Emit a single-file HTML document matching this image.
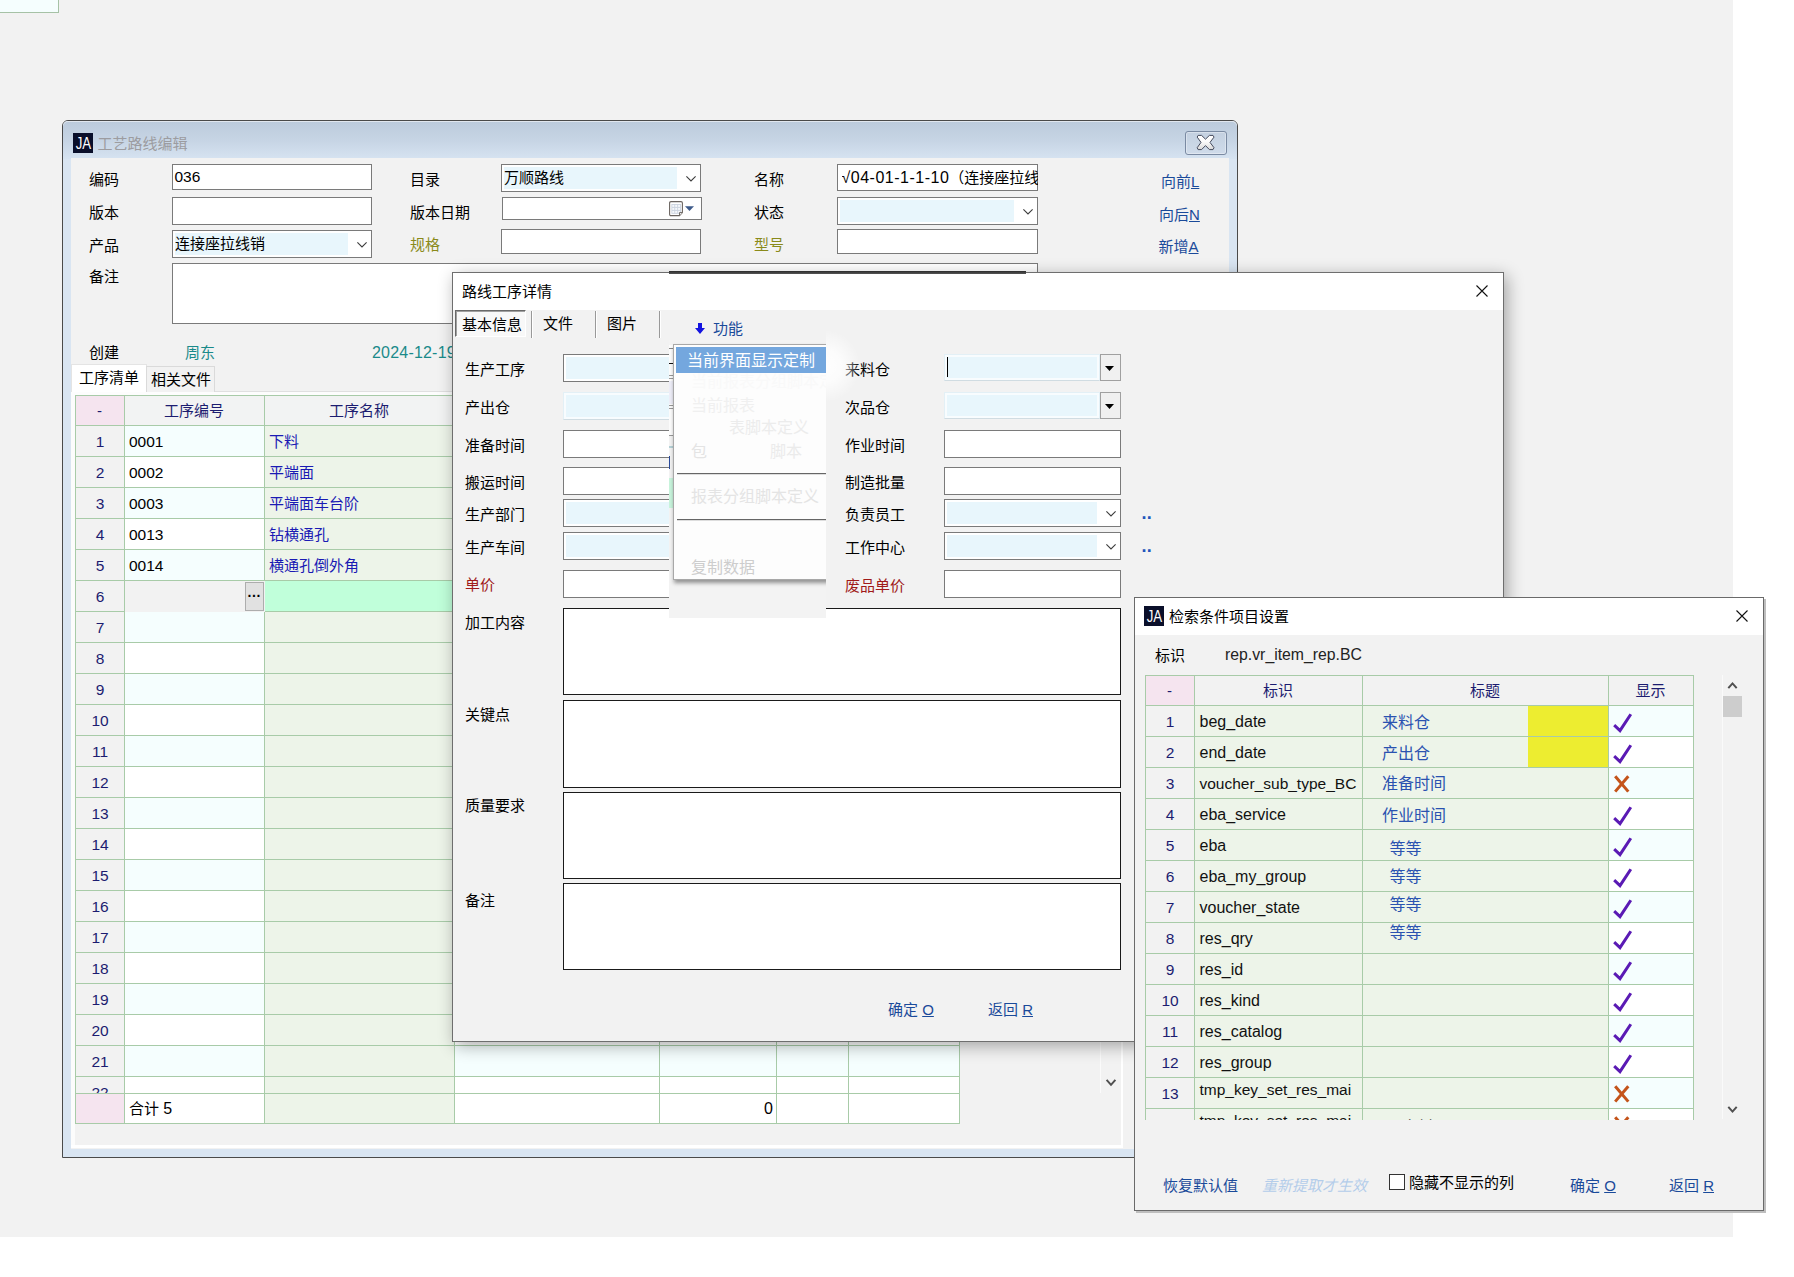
<!DOCTYPE html><html lang="zh-CN"><head><meta charset="utf-8"><title>工艺路线编辑</title><style>
html,body{margin:0;padding:0;}
body{width:1794px;height:1277px;position:relative;overflow:hidden;background:#fff;font-family:"Liberation Sans","Noto Sans CJK SC",sans-serif;font-size:15px;}
div{position:absolute;box-sizing:border-box;}
.t{white-space:nowrap;}
.inp{background:#fff;border:1px solid #7a7a7a;}
.inp2{background:#fff;border:1px solid #1a1a1a;}
.u{text-decoration:underline;}
svg{position:absolute;overflow:visible;}
</style></head><body>
<div style="left:0px;top:0px;width:1733px;height:1237px;background:#f2f2f2;"></div>
<div style="left:0px;top:0px;width:59px;height:13px;background:#f5fefe;border-right:1px solid #a6c2a6;border-bottom:1px solid #a6c2a6;"></div>
<div id="w1" style="left:62px;top:120px;width:1176px;height:1038px;border:1px solid #4a4a4a;border-radius:6px 6px 0 0;background:#d9e5f2;">
<div style="left:0;top:0;width:1174px;height:38px;border-radius:5px 5px 0 0;background:linear-gradient(#bccbdc,#c6d4e4 50%,#d6e3f1);box-shadow:inset 0 1px 0 rgba(255,255,255,0.55);"></div>
<div style="left:8px;top:37px;width:1158px;height:991px;background:#f2f2f2;"></div>
</div>
<div style="left:73px;top:133px;width:20px;height:20px;background:#0a0f2a;color:#fff;font-size:16.5px;line-height:20px;text-align:center;"><span style="display:inline-block;transform:scaleX(0.8);letter-spacing:-0.4px;">JA</span></div>
<div class="t" style="left:97.5px;top:131.5px;height:24px;line-height:24px;font-size:15px;color:#9c9ca0;">工艺路线编辑</div>
<div style="left:1185px;top:131px;width:42px;height:24px;border:1px solid #7a8aa2;border-radius:3px;background:linear-gradient(#c3d0e0,#cfdbea);box-shadow:inset 0 0 0 1px rgba(255,255,255,0.35);"></div>
<svg style="left:1197px;top:135px" width="18" height="16" viewBox="0 0 18 16"><defs><linearGradient id="xg" x1="0" y1="0" x2="0" y2="1"><stop offset="0" stop-color="#ffffff"/><stop offset="0.45" stop-color="#fafafa"/><stop offset="1" stop-color="#d8d8d8"/></linearGradient></defs><path d="M0.2 2.1 L1.1 0.4 L4.6 0.4 L8.5 4.2 L12.4 0.4 L16 0.4 L17 2.1 L13 7.4 L17 12.7 L16 14.6 L12.4 14.6 L8.5 10.6 L4.6 14.6 L1.1 14.6 L0.2 12.7 L4 7.4 Z" fill="url(#xg)" stroke="#454a5c" stroke-width="1" stroke-linejoin="round"/></svg>
<div class="t" style="left:89px;top:168.0px;height:24px;line-height:24px;font-size:15px;color:#000;">编码</div>
<div class="inp" style="left:172px;top:164px;width:200px;height:26px;"></div>
<div class="t" style="left:174.5px;top:165.0px;height:24px;line-height:24px;font-size:15.5px;color:#000;">036</div>
<div class="t" style="left:89px;top:201.0px;height:24px;line-height:24px;font-size:15px;color:#000;">版本</div>
<div class="inp" style="left:172px;top:197px;width:200px;height:28px;"></div>
<div class="t" style="left:89px;top:234.0px;height:24px;line-height:24px;font-size:15px;color:#000;">产品</div>
<div class="inp" style="left:172px;top:230px;width:200px;height:28px;"></div>
<div style="left:175px;top:233px;width:173px;height:22px;background:#e8f6fc;"></div>
<div class="t" style="left:175px;top:231.5px;height:24px;line-height:24px;font-size:15px;color:#000;">连接座拉线销</div>
<svg style="left:356.5px;top:241.5px" width="10" height="6" viewBox="0 0 10 6"><path d="M0.4 0.4 L5 5 L9.6 0.4" fill="none" stroke="#3c3c3c" stroke-width="1.1"/></svg>
<div class="t" style="left:89px;top:264.5px;height:24px;line-height:24px;font-size:15px;color:#000;">备注</div>
<div class="inp" style="left:172px;top:263px;width:866px;height:61px;"></div>
<div class="t" style="left:410px;top:168.0px;height:24px;line-height:24px;font-size:15px;color:#000;">目录</div>
<div class="inp" style="left:501px;top:164px;width:200px;height:28px;"></div>
<div style="left:504px;top:167px;width:173px;height:22px;background:#e8f6fc;"></div>
<div class="t" style="left:504px;top:165.5px;height:24px;line-height:24px;font-size:15px;color:#000;">万顺路线</div>
<svg style="left:685.5px;top:175.5px" width="10" height="6" viewBox="0 0 10 6"><path d="M0.4 0.4 L5 5 L9.6 0.4" fill="none" stroke="#3c3c3c" stroke-width="1.1"/></svg>
<div class="t" style="left:410px;top:201.0px;height:24px;line-height:24px;font-size:15px;color:#000;">版本日期</div>
<div class="inp" style="left:502px;top:197px;width:200px;height:23px;"></div>
<svg style="left:669px;top:201px" width="27" height="16" viewBox="0 0 27 16"><path d="M2 0.6 H12 Q13.4 0.6 13.4 2 V11.5 L10.5 14.6 H2 Q0.6 14.6 0.6 13.2 V2 Q0.6 0.6 2 0.6 Z" fill="#fff" stroke="#6a6460" stroke-width="1.1"/><rect x="2.4" y="3" width="9.6" height="9.8" fill="#ccd4e0"/><g fill="#f6f8fb"><rect x="3.3" y="3.9" width="2" height="2"/><rect x="6.2" y="3.9" width="2" height="2"/><rect x="9.1" y="3.9" width="2" height="2"/><rect x="3.3" y="6.9" width="2" height="2"/><rect x="6.2" y="6.9" width="2" height="2"/><rect x="9.1" y="6.9" width="2" height="2"/><rect x="3.3" y="9.9" width="2" height="2"/><rect x="6.2" y="9.9" width="2" height="2"/><rect x="9.1" y="9.9" width="2" height="2"/></g><path d="M10.5 14.6 V11.5 H13.4" fill="#eee" stroke="#6a6460" stroke-width="0.9"/><path d="M16 5.2 H25 L20.5 10 Z" fill="#3d5a8a"/></svg>
<div class="t" style="left:410px;top:233.0px;height:24px;line-height:24px;font-size:15px;color:#8a8a1a;">规格</div>
<div class="inp" style="left:501px;top:229px;width:200px;height:25px;"></div>
<div class="t" style="left:754px;top:168.0px;height:24px;line-height:24px;font-size:15px;color:#000;">名称</div>
<div class="inp" style="left:837px;top:164px;width:201px;height:27px;"></div>
<div class="t" style="left:841.5px;top:165.5px;height:24px;line-height:24px;font-size:15px;color:#000;width:196px;overflow:hidden;"><span style="font-size:16px;letter-spacing:0.5px;">√04-01-1-1-10</span>（连接座拉线</div>
<div class="t" style="left:754px;top:201.0px;height:24px;line-height:24px;font-size:15px;color:#000;">状态</div>
<div class="inp" style="left:837px;top:197px;width:201px;height:28px;"></div>
<div style="left:840px;top:200px;width:174px;height:22px;background:#e8f6fc;"></div>
<svg style="left:1022.5px;top:208.5px" width="10" height="6" viewBox="0 0 10 6"><path d="M0.4 0.4 L5 5 L9.6 0.4" fill="none" stroke="#3c3c3c" stroke-width="1.1"/></svg>
<div class="t" style="left:754px;top:233.0px;height:24px;line-height:24px;font-size:15px;color:#8a8a1a;">型号</div>
<div class="inp" style="left:837px;top:229px;width:201px;height:25px;"></div>
<div class="t" style="left:1161px;top:170.0px;height:24px;line-height:24px;font-size:15px;color:#1a4a9a;">向前<span class="u">L</span></div>
<div class="t" style="left:1159px;top:203.0px;height:24px;line-height:24px;font-size:15px;color:#1a4a9a;">向后<span class="u">N</span></div>
<div class="t" style="left:1158.5px;top:235.0px;height:24px;line-height:24px;font-size:15px;color:#1a4a9a;">新增<span class="u">A</span></div>
<div class="t" style="left:89px;top:341.0px;height:24px;line-height:24px;font-size:15px;color:#000;">创建</div>
<div class="t" style="left:185px;top:341.0px;height:24px;line-height:24px;font-size:15px;color:#1a8a8a;">周东</div>
<div class="t" style="left:372px;top:340.5px;height:24px;line-height:24px;font-size:16px;color:#1a8a8a;letter-spacing:0.2px;">2024-12-19</div>
<div style="left:71px;top:391px;width:1052px;height:757px;background:#f2f2f2;border-left:4px solid #fcfcfc;border-top:1px solid #e0e0e0;border-right:2px solid #fff;border-bottom:3px solid #fff;"></div>
<div style="left:71px;top:392px;width:1050px;height:3px;background:#fdfdfd;"></div>
<div style="left:71px;top:364px;width:76px;height:28px;background:#fff;border:1px solid #e4e4e4;border-bottom:none;"></div>
<div class="t" style="left:79px;top:365.5px;height:24px;line-height:24px;font-size:15px;color:#000;">工序清单</div>
<div style="left:146px;top:366px;width:69px;height:26px;background:#f2f2f2;border:1px solid #dadada;border-bottom:none;"></div>
<div class="t" style="left:151px;top:367.5px;height:24px;line-height:24px;font-size:15px;color:#000;">相关文件</div>
<div style="left:75px;top:395px;width:50px;height:31px;background:#f5e4ef;border:1px solid #a8cba8;"></div>
<div class="t" style="left:75px;top:399.0px;height:24px;line-height:24px;font-size:15px;color:#1c1c70;width:49px;text-align:center;">-</div>
<div style="left:124px;top:395px;width:141px;height:31px;background:#f2f3f3;border:1px solid #a8cba8;"></div>
<div class="t" style="left:124px;top:399.0px;height:24px;line-height:24px;font-size:15px;color:#1c1c70;width:140px;text-align:center;">工序编号</div>
<div style="left:264px;top:395px;width:191px;height:31px;background:#f2f3f3;border:1px solid #a8cba8;"></div>
<div class="t" style="left:264px;top:399.0px;height:24px;line-height:24px;font-size:15px;color:#1c1c70;width:190px;text-align:center;">工序名称</div>
<div style="left:454px;top:395px;width:206px;height:31px;background:#f2f3f3;border:1px solid #a8cba8;"></div>
<div style="left:659px;top:395px;width:118px;height:31px;background:#f2f3f3;border:1px solid #a8cba8;"></div>
<div style="left:776px;top:395px;width:73px;height:31px;background:#f2f3f3;border:1px solid #a8cba8;"></div>
<div style="left:848px;top:395px;width:112px;height:31px;background:#f2f3f3;border:1px solid #a8cba8;"></div>
<div style="left:75px;top:425px;width:50px;height:32px;background:#f2f2f2;border:1px solid #a8cba8;"></div>
<div style="left:124px;top:425px;width:141px;height:32px;background:#f5fefe;border:1px solid #a8cba8;"></div>
<div style="left:264px;top:425px;width:191px;height:32px;background:#edf4e9;border:1px solid #a8cba8;"></div>
<div style="left:454px;top:425px;width:206px;height:32px;background:#f5fefe;border:1px solid #a8cba8;"></div>
<div style="left:659px;top:425px;width:118px;height:32px;background:#f5fefe;border:1px solid #a8cba8;"></div>
<div style="left:776px;top:425px;width:73px;height:32px;background:#f5fefe;border:1px solid #a8cba8;"></div>
<div style="left:848px;top:425px;width:112px;height:32px;background:#f5fefe;border:1px solid #a8cba8;"></div>
<div class="t" style="left:76px;top:429.5px;height:24px;line-height:24px;font-size:15.5px;color:#1c1c70;width:48px;text-align:center;">1</div>
<div class="t" style="left:129px;top:429.5px;height:24px;line-height:24px;font-size:15.5px;color:#000;">0001</div>
<div class="t" style="left:269px;top:429.5px;height:24px;line-height:24px;font-size:15px;color:#1a1ab4;">下料</div>
<div style="left:75px;top:456px;width:50px;height:32px;background:#f2f2f2;border:1px solid #a8cba8;"></div>
<div style="left:124px;top:456px;width:141px;height:32px;background:#fff;border:1px solid #a8cba8;"></div>
<div style="left:264px;top:456px;width:191px;height:32px;background:#edf4e9;border:1px solid #a8cba8;"></div>
<div style="left:454px;top:456px;width:206px;height:32px;background:#fff;border:1px solid #a8cba8;"></div>
<div style="left:659px;top:456px;width:118px;height:32px;background:#fff;border:1px solid #a8cba8;"></div>
<div style="left:776px;top:456px;width:73px;height:32px;background:#fff;border:1px solid #a8cba8;"></div>
<div style="left:848px;top:456px;width:112px;height:32px;background:#fff;border:1px solid #a8cba8;"></div>
<div class="t" style="left:76px;top:460.5px;height:24px;line-height:24px;font-size:15.5px;color:#1c1c70;width:48px;text-align:center;">2</div>
<div class="t" style="left:129px;top:460.5px;height:24px;line-height:24px;font-size:15.5px;color:#000;">0002</div>
<div class="t" style="left:269px;top:460.5px;height:24px;line-height:24px;font-size:15px;color:#1a1ab4;">平端面</div>
<div style="left:75px;top:487px;width:50px;height:32px;background:#f2f2f2;border:1px solid #a8cba8;"></div>
<div style="left:124px;top:487px;width:141px;height:32px;background:#f5fefe;border:1px solid #a8cba8;"></div>
<div style="left:264px;top:487px;width:191px;height:32px;background:#edf4e9;border:1px solid #a8cba8;"></div>
<div style="left:454px;top:487px;width:206px;height:32px;background:#f5fefe;border:1px solid #a8cba8;"></div>
<div style="left:659px;top:487px;width:118px;height:32px;background:#f5fefe;border:1px solid #a8cba8;"></div>
<div style="left:776px;top:487px;width:73px;height:32px;background:#f5fefe;border:1px solid #a8cba8;"></div>
<div style="left:848px;top:487px;width:112px;height:32px;background:#f5fefe;border:1px solid #a8cba8;"></div>
<div class="t" style="left:76px;top:491.5px;height:24px;line-height:24px;font-size:15.5px;color:#1c1c70;width:48px;text-align:center;">3</div>
<div class="t" style="left:129px;top:491.5px;height:24px;line-height:24px;font-size:15.5px;color:#000;">0003</div>
<div class="t" style="left:269px;top:491.5px;height:24px;line-height:24px;font-size:15px;color:#1a1ab4;">平端面车台阶</div>
<div style="left:75px;top:518px;width:50px;height:32px;background:#f2f2f2;border:1px solid #a8cba8;"></div>
<div style="left:124px;top:518px;width:141px;height:32px;background:#fff;border:1px solid #a8cba8;"></div>
<div style="left:264px;top:518px;width:191px;height:32px;background:#edf4e9;border:1px solid #a8cba8;"></div>
<div style="left:454px;top:518px;width:206px;height:32px;background:#fff;border:1px solid #a8cba8;"></div>
<div style="left:659px;top:518px;width:118px;height:32px;background:#fff;border:1px solid #a8cba8;"></div>
<div style="left:776px;top:518px;width:73px;height:32px;background:#fff;border:1px solid #a8cba8;"></div>
<div style="left:848px;top:518px;width:112px;height:32px;background:#fff;border:1px solid #a8cba8;"></div>
<div class="t" style="left:76px;top:522.5px;height:24px;line-height:24px;font-size:15.5px;color:#1c1c70;width:48px;text-align:center;">4</div>
<div class="t" style="left:129px;top:522.5px;height:24px;line-height:24px;font-size:15.5px;color:#000;">0013</div>
<div class="t" style="left:269px;top:522.5px;height:24px;line-height:24px;font-size:15px;color:#1a1ab4;">钻横通孔</div>
<div style="left:75px;top:549px;width:50px;height:32px;background:#f2f2f2;border:1px solid #a8cba8;"></div>
<div style="left:124px;top:549px;width:141px;height:32px;background:#f5fefe;border:1px solid #a8cba8;"></div>
<div style="left:264px;top:549px;width:191px;height:32px;background:#edf4e9;border:1px solid #a8cba8;"></div>
<div style="left:454px;top:549px;width:206px;height:32px;background:#f5fefe;border:1px solid #a8cba8;"></div>
<div style="left:659px;top:549px;width:118px;height:32px;background:#f5fefe;border:1px solid #a8cba8;"></div>
<div style="left:776px;top:549px;width:73px;height:32px;background:#f5fefe;border:1px solid #a8cba8;"></div>
<div style="left:848px;top:549px;width:112px;height:32px;background:#f5fefe;border:1px solid #a8cba8;"></div>
<div class="t" style="left:76px;top:553.5px;height:24px;line-height:24px;font-size:15.5px;color:#1c1c70;width:48px;text-align:center;">5</div>
<div class="t" style="left:129px;top:553.5px;height:24px;line-height:24px;font-size:15.5px;color:#000;">0014</div>
<div class="t" style="left:269px;top:553.5px;height:24px;line-height:24px;font-size:15px;color:#1a1ab4;">横通孔倒外角</div>
<div style="left:75px;top:580px;width:50px;height:32px;background:#f2f2f2;border:1px solid #a8cba8;"></div>
<div style="left:124px;top:580px;width:141px;height:32px;background:#f2f2f2;border:1px solid #a8cba8;"></div>
<div style="left:264px;top:580px;width:191px;height:32px;background:#c0ffda;border:1px solid #a8cba8;"></div>
<div style="left:454px;top:580px;width:206px;height:32px;background:#fff;border:1px solid #a8cba8;"></div>
<div style="left:659px;top:580px;width:118px;height:32px;background:#fff;border:1px solid #a8cba8;"></div>
<div style="left:776px;top:580px;width:73px;height:32px;background:#fff;border:1px solid #a8cba8;"></div>
<div style="left:848px;top:580px;width:112px;height:32px;background:#fff;border:1px solid #a8cba8;"></div>
<div class="t" style="left:76px;top:584.5px;height:24px;line-height:24px;font-size:15.5px;color:#1c1c70;width:48px;text-align:center;">6</div>
<div style="left:75px;top:611px;width:50px;height:32px;background:#f2f2f2;border:1px solid #a8cba8;"></div>
<div style="left:124px;top:611px;width:141px;height:32px;background:#f5fefe;border:1px solid #a8cba8;"></div>
<div style="left:264px;top:611px;width:191px;height:32px;background:#edf4e9;border:1px solid #a8cba8;"></div>
<div style="left:454px;top:611px;width:206px;height:32px;background:#f5fefe;border:1px solid #a8cba8;"></div>
<div style="left:659px;top:611px;width:118px;height:32px;background:#f5fefe;border:1px solid #a8cba8;"></div>
<div style="left:776px;top:611px;width:73px;height:32px;background:#f5fefe;border:1px solid #a8cba8;"></div>
<div style="left:848px;top:611px;width:112px;height:32px;background:#f5fefe;border:1px solid #a8cba8;"></div>
<div class="t" style="left:76px;top:615.5px;height:24px;line-height:24px;font-size:15.5px;color:#1c1c70;width:48px;text-align:center;">7</div>
<div style="left:75px;top:642px;width:50px;height:32px;background:#f2f2f2;border:1px solid #a8cba8;"></div>
<div style="left:124px;top:642px;width:141px;height:32px;background:#fff;border:1px solid #a8cba8;"></div>
<div style="left:264px;top:642px;width:191px;height:32px;background:#edf4e9;border:1px solid #a8cba8;"></div>
<div style="left:454px;top:642px;width:206px;height:32px;background:#fff;border:1px solid #a8cba8;"></div>
<div style="left:659px;top:642px;width:118px;height:32px;background:#fff;border:1px solid #a8cba8;"></div>
<div style="left:776px;top:642px;width:73px;height:32px;background:#fff;border:1px solid #a8cba8;"></div>
<div style="left:848px;top:642px;width:112px;height:32px;background:#fff;border:1px solid #a8cba8;"></div>
<div class="t" style="left:76px;top:646.5px;height:24px;line-height:24px;font-size:15.5px;color:#1c1c70;width:48px;text-align:center;">8</div>
<div style="left:75px;top:673px;width:50px;height:32px;background:#f2f2f2;border:1px solid #a8cba8;"></div>
<div style="left:124px;top:673px;width:141px;height:32px;background:#f5fefe;border:1px solid #a8cba8;"></div>
<div style="left:264px;top:673px;width:191px;height:32px;background:#edf4e9;border:1px solid #a8cba8;"></div>
<div style="left:454px;top:673px;width:206px;height:32px;background:#f5fefe;border:1px solid #a8cba8;"></div>
<div style="left:659px;top:673px;width:118px;height:32px;background:#f5fefe;border:1px solid #a8cba8;"></div>
<div style="left:776px;top:673px;width:73px;height:32px;background:#f5fefe;border:1px solid #a8cba8;"></div>
<div style="left:848px;top:673px;width:112px;height:32px;background:#f5fefe;border:1px solid #a8cba8;"></div>
<div class="t" style="left:76px;top:677.5px;height:24px;line-height:24px;font-size:15.5px;color:#1c1c70;width:48px;text-align:center;">9</div>
<div style="left:75px;top:704px;width:50px;height:32px;background:#f2f2f2;border:1px solid #a8cba8;"></div>
<div style="left:124px;top:704px;width:141px;height:32px;background:#fff;border:1px solid #a8cba8;"></div>
<div style="left:264px;top:704px;width:191px;height:32px;background:#edf4e9;border:1px solid #a8cba8;"></div>
<div style="left:454px;top:704px;width:206px;height:32px;background:#fff;border:1px solid #a8cba8;"></div>
<div style="left:659px;top:704px;width:118px;height:32px;background:#fff;border:1px solid #a8cba8;"></div>
<div style="left:776px;top:704px;width:73px;height:32px;background:#fff;border:1px solid #a8cba8;"></div>
<div style="left:848px;top:704px;width:112px;height:32px;background:#fff;border:1px solid #a8cba8;"></div>
<div class="t" style="left:76px;top:708.5px;height:24px;line-height:24px;font-size:15.5px;color:#1c1c70;width:48px;text-align:center;">10</div>
<div style="left:75px;top:735px;width:50px;height:32px;background:#f2f2f2;border:1px solid #a8cba8;"></div>
<div style="left:124px;top:735px;width:141px;height:32px;background:#f5fefe;border:1px solid #a8cba8;"></div>
<div style="left:264px;top:735px;width:191px;height:32px;background:#edf4e9;border:1px solid #a8cba8;"></div>
<div style="left:454px;top:735px;width:206px;height:32px;background:#f5fefe;border:1px solid #a8cba8;"></div>
<div style="left:659px;top:735px;width:118px;height:32px;background:#f5fefe;border:1px solid #a8cba8;"></div>
<div style="left:776px;top:735px;width:73px;height:32px;background:#f5fefe;border:1px solid #a8cba8;"></div>
<div style="left:848px;top:735px;width:112px;height:32px;background:#f5fefe;border:1px solid #a8cba8;"></div>
<div class="t" style="left:76px;top:739.5px;height:24px;line-height:24px;font-size:15.5px;color:#1c1c70;width:48px;text-align:center;">11</div>
<div style="left:75px;top:766px;width:50px;height:32px;background:#f2f2f2;border:1px solid #a8cba8;"></div>
<div style="left:124px;top:766px;width:141px;height:32px;background:#fff;border:1px solid #a8cba8;"></div>
<div style="left:264px;top:766px;width:191px;height:32px;background:#edf4e9;border:1px solid #a8cba8;"></div>
<div style="left:454px;top:766px;width:206px;height:32px;background:#fff;border:1px solid #a8cba8;"></div>
<div style="left:659px;top:766px;width:118px;height:32px;background:#fff;border:1px solid #a8cba8;"></div>
<div style="left:776px;top:766px;width:73px;height:32px;background:#fff;border:1px solid #a8cba8;"></div>
<div style="left:848px;top:766px;width:112px;height:32px;background:#fff;border:1px solid #a8cba8;"></div>
<div class="t" style="left:76px;top:770.5px;height:24px;line-height:24px;font-size:15.5px;color:#1c1c70;width:48px;text-align:center;">12</div>
<div style="left:75px;top:797px;width:50px;height:32px;background:#f2f2f2;border:1px solid #a8cba8;"></div>
<div style="left:124px;top:797px;width:141px;height:32px;background:#f5fefe;border:1px solid #a8cba8;"></div>
<div style="left:264px;top:797px;width:191px;height:32px;background:#edf4e9;border:1px solid #a8cba8;"></div>
<div style="left:454px;top:797px;width:206px;height:32px;background:#f5fefe;border:1px solid #a8cba8;"></div>
<div style="left:659px;top:797px;width:118px;height:32px;background:#f5fefe;border:1px solid #a8cba8;"></div>
<div style="left:776px;top:797px;width:73px;height:32px;background:#f5fefe;border:1px solid #a8cba8;"></div>
<div style="left:848px;top:797px;width:112px;height:32px;background:#f5fefe;border:1px solid #a8cba8;"></div>
<div class="t" style="left:76px;top:801.5px;height:24px;line-height:24px;font-size:15.5px;color:#1c1c70;width:48px;text-align:center;">13</div>
<div style="left:75px;top:828px;width:50px;height:32px;background:#f2f2f2;border:1px solid #a8cba8;"></div>
<div style="left:124px;top:828px;width:141px;height:32px;background:#fff;border:1px solid #a8cba8;"></div>
<div style="left:264px;top:828px;width:191px;height:32px;background:#edf4e9;border:1px solid #a8cba8;"></div>
<div style="left:454px;top:828px;width:206px;height:32px;background:#fff;border:1px solid #a8cba8;"></div>
<div style="left:659px;top:828px;width:118px;height:32px;background:#fff;border:1px solid #a8cba8;"></div>
<div style="left:776px;top:828px;width:73px;height:32px;background:#fff;border:1px solid #a8cba8;"></div>
<div style="left:848px;top:828px;width:112px;height:32px;background:#fff;border:1px solid #a8cba8;"></div>
<div class="t" style="left:76px;top:832.5px;height:24px;line-height:24px;font-size:15.5px;color:#1c1c70;width:48px;text-align:center;">14</div>
<div style="left:75px;top:859px;width:50px;height:32px;background:#f2f2f2;border:1px solid #a8cba8;"></div>
<div style="left:124px;top:859px;width:141px;height:32px;background:#f5fefe;border:1px solid #a8cba8;"></div>
<div style="left:264px;top:859px;width:191px;height:32px;background:#edf4e9;border:1px solid #a8cba8;"></div>
<div style="left:454px;top:859px;width:206px;height:32px;background:#f5fefe;border:1px solid #a8cba8;"></div>
<div style="left:659px;top:859px;width:118px;height:32px;background:#f5fefe;border:1px solid #a8cba8;"></div>
<div style="left:776px;top:859px;width:73px;height:32px;background:#f5fefe;border:1px solid #a8cba8;"></div>
<div style="left:848px;top:859px;width:112px;height:32px;background:#f5fefe;border:1px solid #a8cba8;"></div>
<div class="t" style="left:76px;top:863.5px;height:24px;line-height:24px;font-size:15.5px;color:#1c1c70;width:48px;text-align:center;">15</div>
<div style="left:75px;top:890px;width:50px;height:32px;background:#f2f2f2;border:1px solid #a8cba8;"></div>
<div style="left:124px;top:890px;width:141px;height:32px;background:#fff;border:1px solid #a8cba8;"></div>
<div style="left:264px;top:890px;width:191px;height:32px;background:#edf4e9;border:1px solid #a8cba8;"></div>
<div style="left:454px;top:890px;width:206px;height:32px;background:#fff;border:1px solid #a8cba8;"></div>
<div style="left:659px;top:890px;width:118px;height:32px;background:#fff;border:1px solid #a8cba8;"></div>
<div style="left:776px;top:890px;width:73px;height:32px;background:#fff;border:1px solid #a8cba8;"></div>
<div style="left:848px;top:890px;width:112px;height:32px;background:#fff;border:1px solid #a8cba8;"></div>
<div class="t" style="left:76px;top:894.5px;height:24px;line-height:24px;font-size:15.5px;color:#1c1c70;width:48px;text-align:center;">16</div>
<div style="left:75px;top:921px;width:50px;height:32px;background:#f2f2f2;border:1px solid #a8cba8;"></div>
<div style="left:124px;top:921px;width:141px;height:32px;background:#f5fefe;border:1px solid #a8cba8;"></div>
<div style="left:264px;top:921px;width:191px;height:32px;background:#edf4e9;border:1px solid #a8cba8;"></div>
<div style="left:454px;top:921px;width:206px;height:32px;background:#f5fefe;border:1px solid #a8cba8;"></div>
<div style="left:659px;top:921px;width:118px;height:32px;background:#f5fefe;border:1px solid #a8cba8;"></div>
<div style="left:776px;top:921px;width:73px;height:32px;background:#f5fefe;border:1px solid #a8cba8;"></div>
<div style="left:848px;top:921px;width:112px;height:32px;background:#f5fefe;border:1px solid #a8cba8;"></div>
<div class="t" style="left:76px;top:925.5px;height:24px;line-height:24px;font-size:15.5px;color:#1c1c70;width:48px;text-align:center;">17</div>
<div style="left:75px;top:952px;width:50px;height:32px;background:#f2f2f2;border:1px solid #a8cba8;"></div>
<div style="left:124px;top:952px;width:141px;height:32px;background:#fff;border:1px solid #a8cba8;"></div>
<div style="left:264px;top:952px;width:191px;height:32px;background:#edf4e9;border:1px solid #a8cba8;"></div>
<div style="left:454px;top:952px;width:206px;height:32px;background:#fff;border:1px solid #a8cba8;"></div>
<div style="left:659px;top:952px;width:118px;height:32px;background:#fff;border:1px solid #a8cba8;"></div>
<div style="left:776px;top:952px;width:73px;height:32px;background:#fff;border:1px solid #a8cba8;"></div>
<div style="left:848px;top:952px;width:112px;height:32px;background:#fff;border:1px solid #a8cba8;"></div>
<div class="t" style="left:76px;top:956.5px;height:24px;line-height:24px;font-size:15.5px;color:#1c1c70;width:48px;text-align:center;">18</div>
<div style="left:75px;top:983px;width:50px;height:32px;background:#f2f2f2;border:1px solid #a8cba8;"></div>
<div style="left:124px;top:983px;width:141px;height:32px;background:#f5fefe;border:1px solid #a8cba8;"></div>
<div style="left:264px;top:983px;width:191px;height:32px;background:#edf4e9;border:1px solid #a8cba8;"></div>
<div style="left:454px;top:983px;width:206px;height:32px;background:#f5fefe;border:1px solid #a8cba8;"></div>
<div style="left:659px;top:983px;width:118px;height:32px;background:#f5fefe;border:1px solid #a8cba8;"></div>
<div style="left:776px;top:983px;width:73px;height:32px;background:#f5fefe;border:1px solid #a8cba8;"></div>
<div style="left:848px;top:983px;width:112px;height:32px;background:#f5fefe;border:1px solid #a8cba8;"></div>
<div class="t" style="left:76px;top:987.5px;height:24px;line-height:24px;font-size:15.5px;color:#1c1c70;width:48px;text-align:center;">19</div>
<div style="left:75px;top:1014px;width:50px;height:32px;background:#f2f2f2;border:1px solid #a8cba8;"></div>
<div style="left:124px;top:1014px;width:141px;height:32px;background:#fff;border:1px solid #a8cba8;"></div>
<div style="left:264px;top:1014px;width:191px;height:32px;background:#edf4e9;border:1px solid #a8cba8;"></div>
<div style="left:454px;top:1014px;width:206px;height:32px;background:#fff;border:1px solid #a8cba8;"></div>
<div style="left:659px;top:1014px;width:118px;height:32px;background:#fff;border:1px solid #a8cba8;"></div>
<div style="left:776px;top:1014px;width:73px;height:32px;background:#fff;border:1px solid #a8cba8;"></div>
<div style="left:848px;top:1014px;width:112px;height:32px;background:#fff;border:1px solid #a8cba8;"></div>
<div class="t" style="left:76px;top:1018.5px;height:24px;line-height:24px;font-size:15.5px;color:#1c1c70;width:48px;text-align:center;">20</div>
<div style="left:75px;top:1045px;width:50px;height:32px;background:#f2f2f2;border:1px solid #a8cba8;"></div>
<div style="left:124px;top:1045px;width:141px;height:32px;background:#f5fefe;border:1px solid #a8cba8;"></div>
<div style="left:264px;top:1045px;width:191px;height:32px;background:#edf4e9;border:1px solid #a8cba8;"></div>
<div style="left:454px;top:1045px;width:206px;height:32px;background:#f5fefe;border:1px solid #a8cba8;"></div>
<div style="left:659px;top:1045px;width:118px;height:32px;background:#f5fefe;border:1px solid #a8cba8;"></div>
<div style="left:776px;top:1045px;width:73px;height:32px;background:#f5fefe;border:1px solid #a8cba8;"></div>
<div style="left:848px;top:1045px;width:112px;height:32px;background:#f5fefe;border:1px solid #a8cba8;"></div>
<div class="t" style="left:76px;top:1049.5px;height:24px;line-height:24px;font-size:15.5px;color:#1c1c70;width:48px;text-align:center;">21</div>
<div style="left:75px;top:1076px;width:50px;height:32px;background:#f2f2f2;border:1px solid #a8cba8;"></div>
<div style="left:124px;top:1076px;width:141px;height:32px;background:#fff;border:1px solid #a8cba8;"></div>
<div style="left:264px;top:1076px;width:191px;height:32px;background:#edf4e9;border:1px solid #a8cba8;"></div>
<div style="left:454px;top:1076px;width:206px;height:32px;background:#fff;border:1px solid #a8cba8;"></div>
<div style="left:659px;top:1076px;width:118px;height:32px;background:#fff;border:1px solid #a8cba8;"></div>
<div style="left:776px;top:1076px;width:73px;height:32px;background:#fff;border:1px solid #a8cba8;"></div>
<div style="left:848px;top:1076px;width:112px;height:32px;background:#fff;border:1px solid #a8cba8;"></div>
<div class="t" style="left:76px;top:1080.5px;height:24px;line-height:24px;font-size:15.5px;color:#1c1c70;width:48px;text-align:center;">22</div>
<div style="left:125px;top:581px;width:140px;height:31px;background:#f2f2f2;"></div>
<div style="left:245px;top:582px;width:19px;height:29px;background:#e1e1e1;border:1px solid #adadad;"></div>
<div class="t" style="left:244.5px;top:580.0px;height:24px;line-height:24px;font-size:14px;color:#000;width:19.6px;text-align:center;font-weight:bold;letter-spacing:0.6px;">...</div>
<div style="left:75px;top:1093px;width:1025px;height:52px;background:#f2f2f2;"></div>
<div style="left:75px;top:1093px;width:50px;height:31px;background:#f5e4ef;border:1px solid #a8cba8;"></div>
<div style="left:124px;top:1093px;width:141px;height:31px;background:#fff;border:1px solid #a8cba8;"></div>
<div style="left:264px;top:1093px;width:191px;height:31px;background:#edf4e9;border:1px solid #a8cba8;"></div>
<div style="left:454px;top:1093px;width:206px;height:31px;background:#fff;border:1px solid #a8cba8;"></div>
<div style="left:659px;top:1093px;width:118px;height:31px;background:#fff;border:1px solid #a8cba8;"></div>
<div style="left:776px;top:1093px;width:73px;height:31px;background:#fff;border:1px solid #a8cba8;"></div>
<div style="left:848px;top:1093px;width:112px;height:31px;background:#fff;border:1px solid #a8cba8;"></div>
<div class="t" style="left:129px;top:1097.0px;height:24px;line-height:24px;font-size:15px;color:#000;">合计 <span style="font-size:16px">5</span></div>
<div class="t" style="left:659px;top:1097.0px;height:24px;line-height:24px;font-size:16px;color:#000;width:114px;text-align:right;">0</div>
<div style="left:1100px;top:395px;width:20px;height:720px;background:#f2f2f2;"></div>
<div style="left:1100px;top:395px;width:1px;height:698px;background:#fbfbfb;"></div>
<svg style="left:1104.5px;top:1078px" width="12" height="9" viewBox="0 0 12 9"><path d="M1.6 1.8 L6 6.8 L10.4 1.8" fill="none" stroke="#505050" stroke-width="2"/></svg>
<div style="left:71px;top:1145px;width:1052px;height:3px;background:#fff;"></div>
<div id="w2" style="left:452px;top:272px;width:1052px;height:770px;background:#f2f2f2;border:1px solid #6e6e6e;box-shadow:3px 4px 16px rgba(0,0,0,0.33);"></div>
<div style="left:453px;top:273px;width:1050px;height:37px;background:#fff;"></div>
<div style="left:669px;top:271px;width:357px;height:3px;background:linear-gradient(#2a2a2a,#555);"></div>
<div class="t" style="left:462px;top:279.5px;height:24px;line-height:24px;font-size:15px;color:#000;">路线工序详情</div>
<svg style="left:1476px;top:285px" width="12" height="12" viewBox="0 0 12 12"><path d="M0.5 0.5 L11.5 11.5 M11.5 0.5 L0.5 11.5" stroke="#111" stroke-width="1.1"/></svg>
<div style="left:455px;top:310px;width:71px;height:27px;border:1px solid #696969;border-right:1px solid #fff;border-bottom:1px solid #fff;background:#f8f8f8;box-shadow:inset 1px 1px 0 #a0a0a0;"></div>
<div class="t" style="left:462px;top:312.5px;height:24px;line-height:24px;font-size:15px;color:#000;">基本信息</div>
<div style="left:531px;top:311px;width:1px;height:27px;background:#999;"></div>
<div style="left:532px;top:311px;width:1px;height:27px;background:#fff;"></div>
<div class="t" style="left:543px;top:312.0px;height:24px;line-height:24px;font-size:15px;color:#000;">文件</div>
<div style="left:595px;top:311px;width:1px;height:27px;background:#999;"></div>
<div style="left:596px;top:311px;width:1px;height:27px;background:#fff;"></div>
<div class="t" style="left:607px;top:312.0px;height:24px;line-height:24px;font-size:15px;color:#000;">图片</div>
<div style="left:659px;top:311px;width:1px;height:27px;background:#999;"></div>
<div style="left:660px;top:311px;width:1px;height:27px;background:#fff;"></div>
<svg style="left:694.5px;top:323px" width="10" height="11" viewBox="0 0 10 11"><path d="M3 0 H7 V5 H10 L5 11 L0 5 H3 Z" fill="#1414e0"/></svg>
<div class="t" style="left:713px;top:316.5px;height:24px;line-height:24px;font-size:15px;color:#1a4a9a;">功能</div>
<div class="t" style="left:465px;top:358.0px;height:24px;line-height:24px;font-size:15px;color:#000;">生产工序</div>
<div class="inp" style="left:563px;top:354px;width:180px;height:28px;"></div>
<div style="left:566px;top:357px;width:153px;height:22px;background:#e8f6fc;"></div>
<svg style="left:727.5px;top:365.5px" width="10" height="6" viewBox="0 0 10 6"><path d="M0.4 0.4 L5 5 L9.6 0.4" fill="none" stroke="#3c3c3c" stroke-width="1.1"/></svg>
<div class="t" style="left:465px;top:395.5px;height:24px;line-height:24px;font-size:15px;color:#000;">产出仓</div>
<div style="left:563px;top:392px;width:180px;height:28px;background:#f8fcfe;border:1px solid #e3f0f6;border-bottom:1px solid #d0dce2;"></div>
<div style="left:566px;top:395px;width:174px;height:22px;background:#e8f6fc;"></div>
<div class="t" style="left:465px;top:433.5px;height:24px;line-height:24px;font-size:15px;color:#000;">准备时间</div>
<div class="inp" style="left:563px;top:430px;width:180px;height:28px;"></div>
<div class="t" style="left:465px;top:471.0px;height:24px;line-height:24px;font-size:15px;color:#000;">搬运时间</div>
<div class="inp" style="left:563px;top:467px;width:180px;height:28px;"></div>
<div class="t" style="left:465px;top:502.5px;height:24px;line-height:24px;font-size:15px;color:#000;">生产部门</div>
<div class="inp" style="left:563px;top:499px;width:180px;height:28px;"></div>
<div style="left:566px;top:502px;width:153px;height:22px;background:#e8f6fc;"></div>
<svg style="left:727.5px;top:510.5px" width="10" height="6" viewBox="0 0 10 6"><path d="M0.4 0.4 L5 5 L9.6 0.4" fill="none" stroke="#3c3c3c" stroke-width="1.1"/></svg>
<div class="t" style="left:465px;top:535.5px;height:24px;line-height:24px;font-size:15px;color:#000;">生产车间</div>
<div class="inp" style="left:563px;top:532px;width:180px;height:28px;"></div>
<div style="left:566px;top:535px;width:153px;height:22px;background:#e8f6fc;"></div>
<svg style="left:727.5px;top:543.5px" width="10" height="6" viewBox="0 0 10 6"><path d="M0.4 0.4 L5 5 L9.6 0.4" fill="none" stroke="#3c3c3c" stroke-width="1.1"/></svg>
<div class="t" style="left:465px;top:572.5px;height:24px;line-height:24px;font-size:15px;color:#a01a1a;">单价</div>
<div class="inp" style="left:563px;top:570px;width:180px;height:28px;"></div>
<div class="t" style="left:845px;top:358.0px;height:24px;line-height:24px;font-size:15px;color:#000;">来料仓</div>
<div style="left:944px;top:354px;width:156px;height:27px;background:#f8fcfe;border:1px solid #e3f0f6;border-bottom:1px solid #d0dce2;"></div>
<div style="left:947px;top:357px;width:150px;height:21px;background:#e8f6fc;"></div>
<div style="left:1100px;top:354px;width:21px;height:27px;background:#f0f0f0;border:1px solid #a0a0a0;"></div>
<svg style="left:1105px;top:365.5px" width="9" height="5" viewBox="0 0 9 5"><path d="M0 0 H9 L4.5 5 Z" fill="#000"/></svg>
<div style="left:947px;top:357px;width:1px;height:20px;background:#000;"></div>
<div class="t" style="left:845px;top:395.5px;height:24px;line-height:24px;font-size:15px;color:#000;">次品仓</div>
<div style="left:944px;top:392px;width:156px;height:27px;background:#f8fcfe;border:1px solid #e3f0f6;border-bottom:1px solid #d0dce2;"></div>
<div style="left:947px;top:395px;width:150px;height:21px;background:#e8f6fc;"></div>
<div style="left:1100px;top:392px;width:21px;height:27px;background:#f0f0f0;border:1px solid #a0a0a0;"></div>
<svg style="left:1105px;top:403.5px" width="9" height="5" viewBox="0 0 9 5"><path d="M0 0 H9 L4.5 5 Z" fill="#000"/></svg>
<div class="t" style="left:845px;top:433.5px;height:24px;line-height:24px;font-size:15px;color:#000;">作业时间</div>
<div class="inp" style="left:944px;top:430px;width:177px;height:28px;"></div>
<div class="t" style="left:845px;top:471.0px;height:24px;line-height:24px;font-size:15px;color:#000;">制造批量</div>
<div class="inp" style="left:944px;top:467px;width:177px;height:28px;"></div>
<div class="t" style="left:845px;top:502.5px;height:24px;line-height:24px;font-size:15px;color:#000;">负责员工</div>
<div class="inp" style="left:944px;top:499px;width:177px;height:28px;"></div>
<div style="left:947px;top:502px;width:150px;height:22px;background:#e8f6fc;"></div>
<svg style="left:1105.5px;top:510.5px" width="10" height="6" viewBox="0 0 10 6"><path d="M0.4 0.4 L5 5 L9.6 0.4" fill="none" stroke="#3c3c3c" stroke-width="1.1"/></svg>
<div class="t" style="left:845px;top:535.5px;height:24px;line-height:24px;font-size:15px;color:#000;">工作中心</div>
<div class="inp" style="left:944px;top:532px;width:177px;height:28px;"></div>
<div style="left:947px;top:535px;width:150px;height:22px;background:#e8f6fc;"></div>
<svg style="left:1105.5px;top:543.5px" width="10" height="6" viewBox="0 0 10 6"><path d="M0.4 0.4 L5 5 L9.6 0.4" fill="none" stroke="#3c3c3c" stroke-width="1.1"/></svg>
<div class="t" style="left:845px;top:573.5px;height:24px;line-height:24px;font-size:15px;color:#a01a1a;">废品单价</div>
<div class="inp" style="left:944px;top:570px;width:177px;height:28px;"></div>
<div class="t" style="left:1141.5px;top:500.79999999999995px;height:24px;line-height:24px;font-size:18px;color:#2255bb;font-weight:bold;letter-spacing:0.3px;">..</div>
<div class="t" style="left:1141.5px;top:533.8px;height:24px;line-height:24px;font-size:18px;color:#2255bb;font-weight:bold;letter-spacing:0.3px;">..</div>
<div class="t" style="left:465px;top:610.5px;height:24px;line-height:24px;font-size:15px;color:#000;">加工内容</div>
<div class="inp2" style="left:563px;top:608px;width:558px;height:87px;"></div>
<div class="t" style="left:465px;top:702.5px;height:24px;line-height:24px;font-size:15px;color:#000;">关键点</div>
<div class="inp2" style="left:563px;top:700px;width:558px;height:88px;"></div>
<div class="t" style="left:465px;top:793.5px;height:24px;line-height:24px;font-size:15px;color:#000;">质量要求</div>
<div class="inp2" style="left:563px;top:792px;width:558px;height:87px;"></div>
<div class="t" style="left:465px;top:888.5px;height:24px;line-height:24px;font-size:15px;color:#000;">备注</div>
<div class="inp2" style="left:563px;top:883px;width:558px;height:87px;"></div>
<div class="t" style="left:888px;top:997.5px;height:24px;line-height:24px;font-size:15px;color:#1a4a9a;">确定 <span class="u">O</span></div>
<div class="t" style="left:988px;top:997.5px;height:24px;line-height:24px;font-size:15px;color:#1a4a9a;">返回 <span class="u">R</span></div>
<div style="left:669px;top:340px;width:157px;height:278px;background:#f3f3f3;overflow:hidden;">
<div style="left:0px;top:5px;width:4px;height:90px;background:#fcfcfc;"></div>
<div style="left:0px;top:8px;width:4px;height:1px;background:#888;"></div>
<div style="left:0px;top:22.5px;width:4px;height:1.5px;background:#111;"></div>
<div style="left:0px;top:35px;width:4px;height:1px;background:#999;"></div>
<div style="left:0px;top:38px;width:4px;height:1px;background:#999;"></div>
<div style="left:0px;top:41px;width:4px;height:23px;background:#eeeef8;"></div>
<div style="left:0px;top:65px;width:4px;height:1px;background:#999;"></div>
<div style="left:0px;top:68px;width:4px;height:1px;background:#999;"></div>
<div style="left:0px;top:95px;width:4px;height:1px;background:#999;"></div>
<div style="left:0px;top:106px;width:4px;height:2px;background:#b4d0d6;"></div>
<div style="left:0px;top:116px;width:1.2px;height:13px;background:#2a4a9a;"></div>
<div style="left:0px;top:138px;width:4px;height:30px;background:#c8f4dc;"></div>
<div style="left:4px;top:4px;width:160px;height:236px;background:#fdfdfd;border:1px solid #a8a8a8;box-shadow:1px 3px 4px rgba(0,0,0,0.4);"></div>
<div style="left:7px;top:7px;width:150px;height:26px;background:#74a7de;"></div>
<div class="t" style="left:18px;top:8.5px;height:24px;line-height:24px;font-size:16px;color:#fff;">当前界面显示定制</div>
<div class="t" style="left:22px;top:30.0px;height:24px;line-height:24px;font-size:16px;color:#f9f9f9;">当前报表分组脚本定义</div>
<div class="t" style="left:22px;top:54.0px;height:24px;line-height:24px;font-size:16px;color:#f0f0f0;">当前报表</div>
<div class="t" style="left:60px;top:76.0px;height:24px;line-height:24px;font-size:16px;color:#ececec;">表脚本定义</div>
<div class="t" style="left:22px;top:99.5px;height:24px;line-height:24px;font-size:16px;color:#e4e4e4;">包</div>
<div class="t" style="left:101px;top:99.5px;height:24px;line-height:24px;font-size:16px;color:#ebebeb;">脚本</div>
<div class="t" style="left:22px;top:145.0px;height:24px;line-height:24px;font-size:16px;color:#e4e4e4;">报表分组脚本定义</div>
<div class="t" style="left:22px;top:215.5px;height:24px;line-height:24px;font-size:16px;color:#cdcdcd;">复制数据</div>
<div style="left:8px;top:133px;width:150px;height:1px;background:#666;"></div>
<div style="left:8px;top:134px;width:150px;height:1px;background:#ddd;"></div>
<div style="left:8px;top:179px;width:150px;height:1px;background:#666;"></div>
<div style="left:8px;top:180px;width:150px;height:1px;background:#ddd;"></div>
</div>
<div style="left:826px;top:330px;width:34px;height:72px;background:radial-gradient(ellipse 100% 50% at 0% 50%,rgba(255,255,255,0.95) 0%,rgba(255,255,255,0.75) 45%,rgba(255,255,255,0) 100%);"></div>
<div id="w3" style="left:1134px;top:597px;width:630px;height:614px;background:#f2f2f2;border:1px solid #6a6a6a;box-shadow:2px 2px 0 #bebebe;"></div>
<div style="left:1135px;top:598px;width:628px;height:37px;background:#fff;"></div>
<div style="left:1144px;top:606px;width:20px;height:20px;background:#0a0f2a;color:#fff;font-size:16.5px;line-height:20px;text-align:center;"><span style="display:inline-block;transform:scaleX(0.8);letter-spacing:-0.4px;">JA</span></div>
<div class="t" style="left:1169px;top:604.5px;height:24px;line-height:24px;font-size:15px;color:#000;">检索条件项目设置</div>
<svg style="left:1736px;top:610px" width="12" height="12" viewBox="0 0 12 12"><path d="M0.5 0.5 L11.5 11.5 M11.5 0.5 L0.5 11.5" stroke="#111" stroke-width="1.1"/></svg>
<div class="t" style="left:1155px;top:644.0px;height:24px;line-height:24px;font-size:15px;color:#000;">标识</div>
<div class="t" style="left:1225px;top:643.0px;height:24px;line-height:24px;font-size:15.8px;color:#222;">rep.vr_item_rep.BC</div>
<div style="left:1145px;top:675px;width:50px;height:31px;background:#f5e4ef;border:1px solid #a8cba8;"></div>
<div class="t" style="left:1145px;top:679.0px;height:24px;line-height:24px;font-size:15px;color:#1c1c70;width:49px;text-align:center;">-</div>
<div style="left:1194px;top:675px;width:169px;height:31px;background:#f2f2f2;border:1px solid #a8cba8;"></div>
<div class="t" style="left:1194px;top:679.0px;height:24px;line-height:24px;font-size:15px;color:#1c1c70;width:168px;text-align:center;">标识</div>
<div style="left:1362px;top:675px;width:247px;height:31px;background:#f2f2f2;border:1px solid #a8cba8;"></div>
<div class="t" style="left:1362px;top:679.0px;height:24px;line-height:24px;font-size:15px;color:#1c1c70;width:246px;text-align:center;">标题</div>
<div style="left:1608px;top:675px;width:86px;height:31px;background:#f2f2f2;border:1px solid #a8cba8;"></div>
<div class="t" style="left:1608px;top:679.0px;height:24px;line-height:24px;font-size:15px;color:#1c1c70;width:85px;text-align:center;">显示</div>
<div style="left:1140px;top:700px;width:560px;height:420px;overflow:hidden;">
<div style="left:5px;top:5px;width:50px;height:32px;background:#f2f2f2;border:1px solid #a8cba8;"></div>
<div style="left:54px;top:5px;width:169px;height:32px;background:#edf4e9;border:1px solid #a8cba8;"></div>
<div style="left:222px;top:5px;width:247px;height:32px;background:#edf4e9;border:1px solid #a8cba8;"></div>
<div style="left:468px;top:5px;width:86px;height:32px;background:#f5fefe;border:1px solid #a8cba8;"></div>
<div style="left:388px;top:6px;width:80px;height:30px;background:#eded30;"></div>
<div class="t" style="left:6px;top:9.5px;height:24px;line-height:24px;font-size:15.5px;color:#1c1c70;width:48px;text-align:center;">1</div>
<div class="t" style="left:59.5px;top:10.0px;height:24px;line-height:24px;font-size:16px;color:#111;">beg_date</div>
<div class="t" style="left:242px;top:11.0px;height:24px;line-height:24px;font-size:16px;color:#2a52b0;">来料仓</div>
<svg style="left:473px;top:5px" width="22" height="30" viewBox="0 0 22 30"><path d="M1.2 20.2 L7 25.6 L17.8 9.2" fill="none" stroke="#5a1ab4" stroke-width="3"/></svg>
<div style="left:5px;top:36px;width:50px;height:32px;background:#f2f2f2;border:1px solid #a8cba8;"></div>
<div style="left:54px;top:36px;width:169px;height:32px;background:#edf4e9;border:1px solid #a8cba8;"></div>
<div style="left:222px;top:36px;width:247px;height:32px;background:#edf4e9;border:1px solid #a8cba8;"></div>
<div style="left:468px;top:36px;width:86px;height:32px;background:#fff;border:1px solid #a8cba8;"></div>
<div style="left:388px;top:37px;width:80px;height:31px;background:#eded30;"></div>
<div class="t" style="left:6px;top:40.5px;height:24px;line-height:24px;font-size:15.5px;color:#1c1c70;width:48px;text-align:center;">2</div>
<div class="t" style="left:59.5px;top:41.0px;height:24px;line-height:24px;font-size:16px;color:#111;">end_date</div>
<div class="t" style="left:242px;top:42.0px;height:24px;line-height:24px;font-size:16px;color:#2a52b0;">产出仓</div>
<svg style="left:473px;top:36px" width="22" height="30" viewBox="0 0 22 30"><path d="M1.2 20.2 L7 25.6 L17.8 9.2" fill="none" stroke="#5a1ab4" stroke-width="3"/></svg>
<div style="left:5px;top:67px;width:50px;height:32px;background:#f2f2f2;border:1px solid #a8cba8;"></div>
<div style="left:54px;top:67px;width:169px;height:32px;background:#edf4e9;border:1px solid #a8cba8;"></div>
<div style="left:222px;top:67px;width:247px;height:32px;background:#edf4e9;border:1px solid #a8cba8;"></div>
<div style="left:468px;top:67px;width:86px;height:32px;background:#f5fefe;border:1px solid #a8cba8;"></div>
<div class="t" style="left:6px;top:71.5px;height:24px;line-height:24px;font-size:15.5px;color:#1c1c70;width:48px;text-align:center;">3</div>
<div class="t" style="left:59.5px;top:72.0px;height:24px;line-height:24px;font-size:15.5px;color:#111;">voucher_sub_type_BC</div>
<div class="t" style="left:242px;top:71.5px;height:24px;line-height:24px;font-size:16px;color:#2a52b0;">准备时间</div>
<svg style="left:474px;top:75px" width="16" height="18" viewBox="0 0 16 18"><path d="M1.2 1.2 L14.3 16.6 M14.3 1.2 L1.2 16.6" fill="none" stroke="#c4541a" stroke-width="3"/></svg>
<div style="left:5px;top:98px;width:50px;height:32px;background:#f2f2f2;border:1px solid #a8cba8;"></div>
<div style="left:54px;top:98px;width:169px;height:32px;background:#edf4e9;border:1px solid #a8cba8;"></div>
<div style="left:222px;top:98px;width:247px;height:32px;background:#edf4e9;border:1px solid #a8cba8;"></div>
<div style="left:468px;top:98px;width:86px;height:32px;background:#fff;border:1px solid #a8cba8;"></div>
<div class="t" style="left:6px;top:102.5px;height:24px;line-height:24px;font-size:15.5px;color:#1c1c70;width:48px;text-align:center;">4</div>
<div class="t" style="left:59.5px;top:103.0px;height:24px;line-height:24px;font-size:16px;color:#111;">eba_service</div>
<div class="t" style="left:242px;top:103.5px;height:24px;line-height:24px;font-size:16px;color:#2a52b0;">作业时间</div>
<svg style="left:473px;top:98px" width="22" height="30" viewBox="0 0 22 30"><path d="M1.2 20.2 L7 25.6 L17.8 9.2" fill="none" stroke="#5a1ab4" stroke-width="3"/></svg>
<div style="left:5px;top:129px;width:50px;height:32px;background:#f2f2f2;border:1px solid #a8cba8;"></div>
<div style="left:54px;top:129px;width:169px;height:32px;background:#edf4e9;border:1px solid #a8cba8;"></div>
<div style="left:222px;top:129px;width:247px;height:32px;background:#edf4e9;border:1px solid #a8cba8;"></div>
<div style="left:468px;top:129px;width:86px;height:32px;background:#f5fefe;border:1px solid #a8cba8;"></div>
<div class="t" style="left:6px;top:133.5px;height:24px;line-height:24px;font-size:15.5px;color:#1c1c70;width:48px;text-align:center;">5</div>
<div class="t" style="left:59.5px;top:134.0px;height:24px;line-height:24px;font-size:16px;color:#111;">eba</div>
<div class="t" style="left:249.5px;top:137.2px;height:24px;line-height:24px;font-size:16px;color:#2a52b0;">等等</div>
<svg style="left:473px;top:129px" width="22" height="30" viewBox="0 0 22 30"><path d="M1.2 20.2 L7 25.6 L17.8 9.2" fill="none" stroke="#5a1ab4" stroke-width="3"/></svg>
<div style="left:5px;top:160px;width:50px;height:32px;background:#f2f2f2;border:1px solid #a8cba8;"></div>
<div style="left:54px;top:160px;width:169px;height:32px;background:#edf4e9;border:1px solid #a8cba8;"></div>
<div style="left:222px;top:160px;width:247px;height:32px;background:#edf4e9;border:1px solid #a8cba8;"></div>
<div style="left:468px;top:160px;width:86px;height:32px;background:#fff;border:1px solid #a8cba8;"></div>
<div class="t" style="left:6px;top:164.5px;height:24px;line-height:24px;font-size:15.5px;color:#1c1c70;width:48px;text-align:center;">6</div>
<div class="t" style="left:59.5px;top:165.0px;height:24px;line-height:24px;font-size:16px;color:#111;">eba_my_group</div>
<div class="t" style="left:249.5px;top:165.3px;height:24px;line-height:24px;font-size:16px;color:#2a52b0;">等等</div>
<svg style="left:473px;top:160px" width="22" height="30" viewBox="0 0 22 30"><path d="M1.2 20.2 L7 25.6 L17.8 9.2" fill="none" stroke="#5a1ab4" stroke-width="3"/></svg>
<div style="left:5px;top:191px;width:50px;height:32px;background:#f2f2f2;border:1px solid #a8cba8;"></div>
<div style="left:54px;top:191px;width:169px;height:32px;background:#edf4e9;border:1px solid #a8cba8;"></div>
<div style="left:222px;top:191px;width:247px;height:32px;background:#edf4e9;border:1px solid #a8cba8;"></div>
<div style="left:468px;top:191px;width:86px;height:32px;background:#f5fefe;border:1px solid #a8cba8;"></div>
<div class="t" style="left:6px;top:195.5px;height:24px;line-height:24px;font-size:15.5px;color:#1c1c70;width:48px;text-align:center;">7</div>
<div class="t" style="left:59.5px;top:196.0px;height:24px;line-height:24px;font-size:16px;color:#111;">voucher_state</div>
<div class="t" style="left:249.5px;top:193.4px;height:24px;line-height:24px;font-size:16px;color:#2a52b0;">等等</div>
<svg style="left:473px;top:191px" width="22" height="30" viewBox="0 0 22 30"><path d="M1.2 20.2 L7 25.6 L17.8 9.2" fill="none" stroke="#5a1ab4" stroke-width="3"/></svg>
<div style="left:5px;top:222px;width:50px;height:32px;background:#f2f2f2;border:1px solid #a8cba8;"></div>
<div style="left:54px;top:222px;width:169px;height:32px;background:#edf4e9;border:1px solid #a8cba8;"></div>
<div style="left:222px;top:222px;width:247px;height:32px;background:#edf4e9;border:1px solid #a8cba8;"></div>
<div style="left:468px;top:222px;width:86px;height:32px;background:#fff;border:1px solid #a8cba8;"></div>
<div class="t" style="left:6px;top:226.5px;height:24px;line-height:24px;font-size:15.5px;color:#1c1c70;width:48px;text-align:center;">8</div>
<div class="t" style="left:59.5px;top:227.0px;height:24px;line-height:24px;font-size:16px;color:#111;">res_qry</div>
<div class="t" style="left:249.5px;top:221.0px;height:24px;line-height:24px;font-size:16px;color:#2a52b0;">等等</div>
<svg style="left:473px;top:222px" width="22" height="30" viewBox="0 0 22 30"><path d="M1.2 20.2 L7 25.6 L17.8 9.2" fill="none" stroke="#5a1ab4" stroke-width="3"/></svg>
<div style="left:5px;top:253px;width:50px;height:32px;background:#f2f2f2;border:1px solid #a8cba8;"></div>
<div style="left:54px;top:253px;width:169px;height:32px;background:#edf4e9;border:1px solid #a8cba8;"></div>
<div style="left:222px;top:253px;width:247px;height:32px;background:#edf4e9;border:1px solid #a8cba8;"></div>
<div style="left:468px;top:253px;width:86px;height:32px;background:#f5fefe;border:1px solid #a8cba8;"></div>
<div class="t" style="left:6px;top:257.5px;height:24px;line-height:24px;font-size:15.5px;color:#1c1c70;width:48px;text-align:center;">9</div>
<div class="t" style="left:59.5px;top:258.0px;height:24px;line-height:24px;font-size:16px;color:#111;">res_id</div>
<svg style="left:473px;top:253px" width="22" height="30" viewBox="0 0 22 30"><path d="M1.2 20.2 L7 25.6 L17.8 9.2" fill="none" stroke="#5a1ab4" stroke-width="3"/></svg>
<div style="left:5px;top:284px;width:50px;height:32px;background:#f2f2f2;border:1px solid #a8cba8;"></div>
<div style="left:54px;top:284px;width:169px;height:32px;background:#edf4e9;border:1px solid #a8cba8;"></div>
<div style="left:222px;top:284px;width:247px;height:32px;background:#edf4e9;border:1px solid #a8cba8;"></div>
<div style="left:468px;top:284px;width:86px;height:32px;background:#fff;border:1px solid #a8cba8;"></div>
<div class="t" style="left:6px;top:288.5px;height:24px;line-height:24px;font-size:15.5px;color:#1c1c70;width:48px;text-align:center;">10</div>
<div class="t" style="left:59.5px;top:289.0px;height:24px;line-height:24px;font-size:16px;color:#111;">res_kind</div>
<svg style="left:473px;top:284px" width="22" height="30" viewBox="0 0 22 30"><path d="M1.2 20.2 L7 25.6 L17.8 9.2" fill="none" stroke="#5a1ab4" stroke-width="3"/></svg>
<div style="left:5px;top:315px;width:50px;height:32px;background:#f2f2f2;border:1px solid #a8cba8;"></div>
<div style="left:54px;top:315px;width:169px;height:32px;background:#edf4e9;border:1px solid #a8cba8;"></div>
<div style="left:222px;top:315px;width:247px;height:32px;background:#edf4e9;border:1px solid #a8cba8;"></div>
<div style="left:468px;top:315px;width:86px;height:32px;background:#f5fefe;border:1px solid #a8cba8;"></div>
<div class="t" style="left:6px;top:319.5px;height:24px;line-height:24px;font-size:15.5px;color:#1c1c70;width:48px;text-align:center;">11</div>
<div class="t" style="left:59.5px;top:320.0px;height:24px;line-height:24px;font-size:16px;color:#111;">res_catalog</div>
<svg style="left:473px;top:315px" width="22" height="30" viewBox="0 0 22 30"><path d="M1.2 20.2 L7 25.6 L17.8 9.2" fill="none" stroke="#5a1ab4" stroke-width="3"/></svg>
<div style="left:5px;top:346px;width:50px;height:32px;background:#f2f2f2;border:1px solid #a8cba8;"></div>
<div style="left:54px;top:346px;width:169px;height:32px;background:#edf4e9;border:1px solid #a8cba8;"></div>
<div style="left:222px;top:346px;width:247px;height:32px;background:#edf4e9;border:1px solid #a8cba8;"></div>
<div style="left:468px;top:346px;width:86px;height:32px;background:#fff;border:1px solid #a8cba8;"></div>
<div class="t" style="left:6px;top:350.5px;height:24px;line-height:24px;font-size:15.5px;color:#1c1c70;width:48px;text-align:center;">12</div>
<div class="t" style="left:59.5px;top:351.0px;height:24px;line-height:24px;font-size:16px;color:#111;">res_group</div>
<svg style="left:473px;top:346px" width="22" height="30" viewBox="0 0 22 30"><path d="M1.2 20.2 L7 25.6 L17.8 9.2" fill="none" stroke="#5a1ab4" stroke-width="3"/></svg>
<div style="left:5px;top:377px;width:50px;height:32px;background:#f2f2f2;border:1px solid #a8cba8;"></div>
<div style="left:54px;top:377px;width:169px;height:32px;background:#edf4e9;border:1px solid #a8cba8;"></div>
<div style="left:222px;top:377px;width:247px;height:32px;background:#edf4e9;border:1px solid #a8cba8;"></div>
<div style="left:468px;top:377px;width:86px;height:32px;background:#f5fefe;border:1px solid #a8cba8;"></div>
<div class="t" style="left:6px;top:381.5px;height:24px;line-height:24px;font-size:15.5px;color:#1c1c70;width:48px;text-align:center;">13</div>
<div class="t" style="left:59.5px;top:378.0px;height:24px;line-height:24px;font-size:15.5px;color:#111;">tmp_key_set_res_mai</div>
<svg style="left:474px;top:385px" width="16" height="18" viewBox="0 0 16 18"><path d="M1.2 1.2 L14.3 16.6 M14.3 1.2 L1.2 16.6" fill="none" stroke="#c4541a" stroke-width="3"/></svg>
<div style="left:5px;top:408px;width:50px;height:32px;background:#f2f2f2;border:1px solid #a8cba8;"></div>
<div style="left:54px;top:408px;width:169px;height:32px;background:#edf4e9;border:1px solid #a8cba8;"></div>
<div style="left:222px;top:408px;width:247px;height:32px;background:#edf4e9;border:1px solid #a8cba8;"></div>
<div style="left:468px;top:408px;width:86px;height:32px;background:#fff;border:1px solid #a8cba8;"></div>
<div class="t" style="left:6px;top:412.5px;height:24px;line-height:24px;font-size:15.5px;color:#1c1c70;width:48px;text-align:center;">14</div>
<div class="t" style="left:59.5px;top:409.0px;height:24px;line-height:24px;font-size:15.5px;color:#111;">tmp_key_set_res_mai</div>
<div class="t" style="left:227px;top:416.0px;height:24px;line-height:24px;font-size:16px;color:#333;">SGN出料</div>
<svg style="left:474px;top:416px" width="16" height="18" viewBox="0 0 16 18"><path d="M1.2 1.2 L14.3 16.6 M14.3 1.2 L1.2 16.6" fill="none" stroke="#c4541a" stroke-width="3"/></svg>
</div>
<div style="left:1136px;top:1120px;width:600px;height:40px;background:#f2f2f2;"></div>
<div style="left:1722px;top:675px;width:1px;height:444px;background:#fafafa;"></div>
<svg style="left:1727px;top:681px" width="11" height="9" viewBox="0 0 11 9"><path d="M1.3 7.2 L5.5 2.4 L9.7 7.2" fill="none" stroke="#505050" stroke-width="2"/></svg>
<div style="left:1723px;top:696px;width:19px;height:21px;background:#cdcdcd;"></div>
<svg style="left:1727px;top:1104.5px" width="11" height="9" viewBox="0 0 11 9"><path d="M1.3 1.8 L5.5 6.6 L9.7 1.8" fill="none" stroke="#505050" stroke-width="2"/></svg>
<div class="t" style="left:1163px;top:1173.5px;height:24px;line-height:24px;font-size:15px;color:#1a4a9a;">恢复默认值</div>
<div class="t" style="left:1262px;top:1173.5px;height:24px;line-height:24px;font-size:15px;color:#b4cdea;font-style:italic;">重新提取才生效</div>
<div style="left:1389px;top:1174px;width:16px;height:16px;background:#fff;border:1px solid #333;"></div>
<div class="t" style="left:1409px;top:1171.0px;height:24px;line-height:24px;font-size:15px;color:#000;">隐藏不显示的列</div>
<div class="t" style="left:1570px;top:1173.5px;height:24px;line-height:24px;font-size:15px;color:#1a4a9a;">确定 <span class="u">O</span></div>
<div class="t" style="left:1669px;top:1173.5px;height:24px;line-height:24px;font-size:15px;color:#1a4a9a;">返回 <span class="u">R</span></div>
</body></html>
